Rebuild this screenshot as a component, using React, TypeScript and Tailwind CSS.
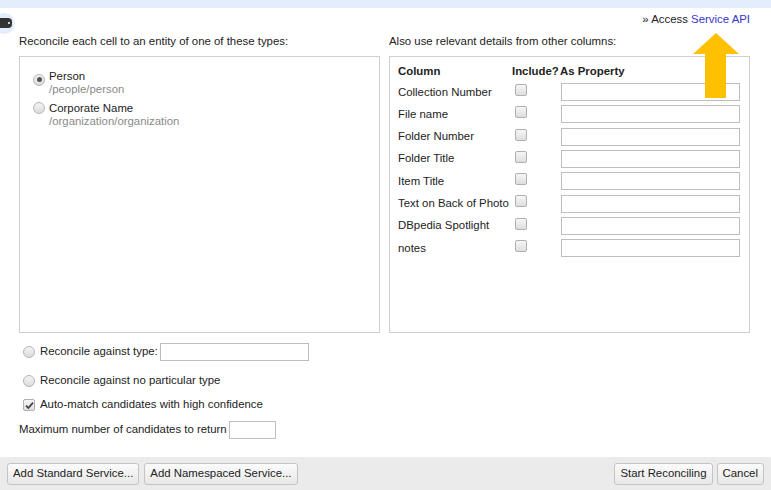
import React from 'react';

const columns = [
  'Collection Number',
  'File name',
  'Folder Number',
  'Folder Title',
  'Item Title',
  'Text on Back of Photo',
  'DBpedia Spotlight',
  'notes',
];

function Radio({ checked = false }: { checked?: boolean }) {
  return (
    <span className="inline-flex items-center justify-center w-[12px] h-[12px] rounded-full border border-[#b5b5b5] bg-gradient-to-b from-[#f4f4f4] to-[#dcdcdc] shrink-0">
      {checked && <span className="w-[5px] h-[5px] rounded-full bg-[#555]" />}
    </span>
  );
}

function Checkbox({ checked = false }: { checked?: boolean }) {
  return (
    <span className="inline-flex items-center justify-center w-[12px] h-[12px] rounded-[2px] border border-[#b0b0b0] bg-gradient-to-b from-[#f6f6f6] to-[#dedede] shrink-0">
      {checked && (
        <svg width="9" height="9" viewBox="0 0 9 9">
          <path d="M1 4.6 L3.4 7 L8 1.6" fill="none" stroke="#444" strokeWidth="1.8" />
        </svg>
      )}
    </span>
  );
}

function Button({ children }: { children: React.ReactNode }) {
  return (
    <button className="h-[22px] px-[5px] rounded-[3px] border border-[#c4c4c4] bg-gradient-to-b from-[#fbfbfb] to-[#e8e8e8] text-[11.4px] text-[#222] leading-none whitespace-nowrap">
      {children}
    </button>
  );
}

export default function App() {
  return (
    <div className="relative w-[771px] h-[490px] bg-white flex flex-col text-[11.4px] text-[#222] font-['Liberation_Sans',Arial,sans-serif] overflow-hidden">
      {/* top band */}
      <div className="h-[8px] bg-[#e3edfb]" />

      {/* side tag handle */}
      <div className="absolute left-[-6px] top-[13px] w-[21px] h-[21px] rounded-full bg-[#e3edfb]" />
      <div className="absolute left-0 top-[18px] w-[12px] h-[10px] rounded-r-[4px] bg-[#333] flex items-center justify-end pr-[2px]">
        <span className="w-[2px] h-[2px] rounded-full bg-white" />
      </div>

      <div className="flex-1 pl-[19px] pr-[21px]">
        <div className="mt-[4px] h-[14px] leading-[14px] text-right">
          » Access <span className="text-[#3535cc]">Service API</span>
        </div>

        <div className="mt-[8px] grid grid-cols-[361px_361px] gap-[9px]">
          <div>
            <div className="h-[14px] leading-[14px]">Reconcile each cell to an entity of one of these types:</div>
            <div className="mt-[8px] h-[277px] border border-[#cfcfcf] pl-[13px] pt-[12px]">
              <div className="flex gap-[4px]">
                <span className="mt-[1px]"><Radio checked /></span>
                <div className="pt-[1px]">
                  <div className="leading-[13px]">Person</div>
                  <div className="leading-[13px] text-[#8a8a8a]">/people/person</div>
                </div>
              </div>
              <div className="flex gap-[4px] mt-[5px]">
                <span className="mt-[1px]"><Radio /></span>
                <div className="pt-[1px]">
                  <div className="leading-[13px]">Corporate Name</div>
                  <div className="leading-[13px] text-[#8a8a8a]">/organization/organization</div>
                </div>
              </div>
            </div>
          </div>

          <div>
            <div className="h-[14px] leading-[14px]">Also use relevant details from other columns:</div>
            <div className="mt-[8px] h-[277px] border border-[#cfcfcf] pl-[8px] pt-[6px]">
              <div className="flex h-[18px] items-center font-bold">
                <span className="w-[114px]">Column</span>
                <span className="w-[48px]">Include?</span>
                <span>As Property</span>
              </div>
              {columns.map((name) => (
                <div key={name} className="flex h-[22.3px] items-center">
                  <span className="w-[114px] whitespace-nowrap">{name}</span>
                  <span className="w-[49px] pl-[3px] self-start pt-[3px]">
                    <Checkbox />
                  </span>
                  <span className="w-[179px] h-[18px] border border-[#bdbdbd] bg-white" />
                </div>
              ))}
            </div>
          </div>
        </div>

        <div className="mt-[10px] flex items-center h-[18px] pl-[4px] gap-[5px]">
          <Radio />
          <span>Reconcile against type:</span>
          <span className="ml-[-3px] w-[149px] h-[18px] border border-[#bdbdbd]" />
        </div>
        <div className="mt-[12px] flex items-center h-[16px] pl-[4px] gap-[5px]">
          <Radio />
          <span>Reconcile against no particular type</span>
        </div>
        <div className="mt-[8px] flex items-center h-[16px] pl-[4px] gap-[5px]">
          <Checkbox checked />
          <span>Auto-match candidates with high confidence</span>
        </div>
        <div className="mt-[8px] flex items-center h-[18px] gap-[2px]">
          <span>Maximum number of candidates to return</span>
          <span className="w-[47px] h-[18px] border border-[#bdbdbd]" />
        </div>
      </div>

      {/* footer */}
      <div className="h-[33px] bg-[#ebebeb] flex items-center justify-between px-[7px]">
        <div className="flex gap-[5px]">
          <Button>Add Standard Service...</Button>
          <Button>Add Namespaced Service...</Button>
        </div>
        <div className="flex gap-[4px]">
          <Button>Start Reconciling</Button>
          <Button>Cancel</Button>
        </div>
      </div>

      {/* annotation arrow */}
      <svg className="absolute left-[693px] top-[33px]" width="46" height="65" viewBox="0 0 46 65">
        <polygon points="23,0 46,21 33,21 33,65 12,65 12,21 0,21" fill="#ffc000" />
      </svg>
    </div>
  );
}
